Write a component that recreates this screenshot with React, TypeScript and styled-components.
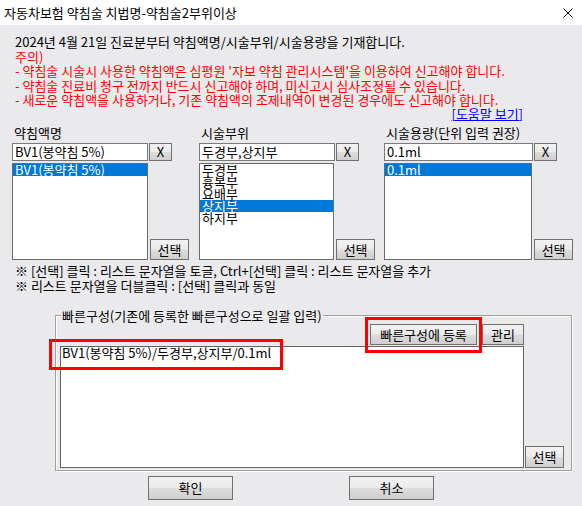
import React from 'react';
import styled, { createGlobalStyle } from 'styled-components';

const GlobalStyle = createGlobalStyle`
  html, body {
    margin: 0;
    padding: 0;
    background: #eaeaed;
  }
  body {
    font-family: "Noto Sans CJK KR", "Noto Sans", sans-serif;
  }
`;

const Dialog = styled.div`
  width: 582px;
  height: 506px;
  display: flex;
  flex-direction: column;
  background: #eaeaed;
  color: #000;
  font-size: 13px;
  overflow: hidden;
`;

const TitleBar = styled.div`
  height: 25px;
  flex: none;
  display: flex;
  align-items: center;
  justify-content: space-between;
  padding: 0 9px 0 4px;
  background: #fff;
`;

const Notice = styled.div`
  padding: 10px 0 0 15px;
  line-height: 14.5px;
`;

const NoticeLine = styled.div<{ $warn?: boolean }>`
  color: ${p => (p.$warn ? '#ff0000' : '#000')};
  white-space: nowrap;
`;

const HelpRow = styled.div`
  display: flex;
  justify-content: flex-end;
  padding-right: 59px;
  margin-top: 0;
  line-height: 12px;
`;

const HelpLink = styled.span`
  color: #0000ff;
  text-decoration: underline;
`;

const Columns = styled.div`
  display: grid;
  grid-template-columns: 178px 176px 189px;
  column-gap: 9px;
  padding: 7px 0 0 12px;
`;

const Field = styled.div`
  display: flex;
  flex-direction: column;
`;

const FieldLabel = styled.div`
  line-height: 12px;
  padding-left: 2px;
  margin-bottom: 4px;
  white-space: nowrap;
`;

const InputRow = styled.div`
  display: flex;
  gap: 1px;
  height: 18px;
`;

const TextBox = styled.div<{ $width: number }>`
  width: ${p => p.$width}px;
  height: 18px;
  box-sizing: border-box;
  border: 1px solid #7a7a7a;
  background: #fff;
  padding: 0 2px;
  line-height: 16px;
  white-space: nowrap;
`;

const Button = styled.button`
  box-sizing: border-box;
  display: flex;
  align-items: center;
  justify-content: center;
  padding: 0;
  margin: 0;
  border: 1px solid #707070;
  background: linear-gradient(to bottom, #f2f2f2 0%, #ebebeb 48%, #dddddd 52%, #cfcfcf 100%);
  color: #000;
  font-family: inherit;
  font-size: 13px;
  white-space: nowrap;
`;

const ClearButton = styled(Button)`
  width: 23px;
  height: 18px;
`;

const ListRow = styled.div`
  display: flex;
  gap: 2px;
  margin-top: 2px;
`;

const ListBox = styled.div<{ $width: number }>`
  width: ${p => p.$width}px;
  height: 97px;
  box-sizing: border-box;
  border: 1px solid #6b6b6b;
  background: #fff;
`;

const ListItem = styled.div<{ $selected?: boolean }>`
  line-height: 12px;
  height: 12px;
  padding-left: 2px;
  white-space: nowrap;
  background: ${p => (p.$selected ? '#0078d7' : 'transparent')};
  color: ${p => (p.$selected ? '#fff' : '#000')};
`;

const PickButton = styled(Button)`
  width: 39px;
  height: 21px;
  align-self: flex-end;
`;

const Notes = styled.div`
  padding: 3px 0 0 15px;
  line-height: 15px;
  white-space: nowrap;
`;

const Group = styled.fieldset`
  width: 517px;
  box-sizing: border-box;
  margin: 17px 0 0 55px;
  padding: 2px 7px 2px 4px;
  border: 1px solid #a0a0a0;
  box-shadow: inset 1px 1px 0 #fff, 1px 1px 0 #fff;
  display: grid;
  grid-template-columns: 464px 39px;
  grid-template-rows: 21px 122px;
  column-gap: 1px;
  row-gap: 1px;
  min-width: 0;
`;

const GroupTitle = styled.legend`
  padding: 0 1px;
  margin-left: 1px;
  line-height: 12px;
  white-space: nowrap;
`;

const ButtonBar = styled.div`
  grid-column: 1;
  display: flex;
  justify-content: flex-end;
  gap: 5px;
`;

const Marked = styled.span`
  position: relative;
  display: flex;
  &::after {
    content: '';
    position: absolute;
    inset: -7px -5px -8px -5px;
    border: 3px solid #ff0000;
    pointer-events: none;
    z-index: 2;
  }
`;

const QuickButton = styled(Button)<{ $width: number }>`
  width: ${p => p.$width}px;
  height: 21px;
`;

const Memo = styled.div`
  grid-column: 1;
  position: relative;
  box-sizing: border-box;
  border: 1px solid #646464;
  background: #fff;
  padding: 0 1px;
  line-height: 12px;
  white-space: nowrap;
`;

const MemoMark = styled.div`
  position: absolute;
  left: -12px;
  top: -8px;
  width: 234px;
  height: 31px;
  box-sizing: border-box;
  border: 3px solid #ff0000;
  pointer-events: none;
  z-index: 2;
`;

const MemoPick = styled(Button)`
  width: 39px;
  height: 22px;
  align-self: end;
`;

const Footer = styled.div`
  display: flex;
  gap: 116px;
  padding: 5px 0 0 148px;
`;

const DialogButton = styled(Button)`
  width: 85px;
  height: 24px;
`;

const CloseIcon = () => (
  <svg width="10" height="10" viewBox="0 0 10 10">
    <path d="M0.5 0.5 L9.5 9.5 M9.5 0.5 L0.5 9.5" stroke="#000" strokeWidth="1" fill="none" />
  </svg>
);

interface ColumnProps {
  label: string;
  value: string;
  items: string[];
  selected: number[];
  width: number;
}

const Column = ({ label, value, items, selected, width }: ColumnProps) => (
  <Field>
    <FieldLabel>{label}</FieldLabel>
    <InputRow>
      <TextBox $width={width}>{value}</TextBox>
      <ClearButton>X</ClearButton>
    </InputRow>
    <ListRow>
      <ListBox $width={width}>
        {items.map((it, i) => (
          <ListItem key={it} $selected={selected.includes(i)}>
            {it}
          </ListItem>
        ))}
      </ListBox>
      <PickButton>선택</PickButton>
    </ListRow>
  </Field>
);

export default function App() {
  return (
    <>
      <GlobalStyle />
      <Dialog>
        <TitleBar>
          <span>자동차보험 약침술 치법명-약침술2부위이상</span>
          <CloseIcon />
        </TitleBar>
        <Notice>
          <NoticeLine>2024년 4월 21일 진료분부터 약침액명/시술부위/시술용량을 기재합니다.</NoticeLine>
          <NoticeLine $warn>주의)</NoticeLine>
          <NoticeLine $warn>- 약침술 시술시 사용한 약침액은 심평원 '자보 약침 관리시스템'을 이용하여 신고해야 합니다.</NoticeLine>
          <NoticeLine $warn>- 약침술 진료비 청구 전까지 반드시 신고해야 하며, 미신고시 심사조정될 수 있습니다.</NoticeLine>
          <NoticeLine $warn>- 새로운 약침액을 사용하거나, 기존 약침액의 조제내역이 변경된 경우에도 신고해야 합니다.</NoticeLine>
        </Notice>
        <HelpRow>
          <HelpLink>[도움말 보기]</HelpLink>
        </HelpRow>
        <Columns>
          <Column label="약침액명" value="BV1(봉약침 5%)" items={['BV1(봉약침 5%)']} selected={[0]} width={136} />
          <Column
            label="시술부위"
            value="두경부,상지부"
            items={['두경부', '흉복부', '요배부', '상지부', '하지부']}
            selected={[3]}
            width={136}
          />
          <Column label="시술용량(단위 입력 권장)" value="0.1ml" items={['0.1ml']} selected={[0]} width={149} />
        </Columns>
        <Notes>
          <div>※ [선택] 클릭 : 리스트 문자열을 토글, Ctrl+[선택] 클릭 : 리스트 문자열을 추가</div>
          <div>※ 리스트 문자열을 더블클릭 : [선택] 클릭과 동일</div>
        </Notes>
        <Group>
          <GroupTitle>빠른구성(기존에 등록한 빠른구성으로 일괄 입력)</GroupTitle>
          <ButtonBar>
            <Marked>
              <QuickButton $width={107}>빠른구성에 등록</QuickButton>
            </Marked>
            <QuickButton $width={42}>관리</QuickButton>
          </ButtonBar>
          <div />
          <Memo>
            BV1(봉약침 5%)/두경부,상지부/0.1ml
            <MemoMark />
          </Memo>
          <MemoPick>선택</MemoPick>
        </Group>
        <Footer>
          <DialogButton>확인</DialogButton>
          <DialogButton>취소</DialogButton>
        </Footer>
      </Dialog>
    </>
  );
}
